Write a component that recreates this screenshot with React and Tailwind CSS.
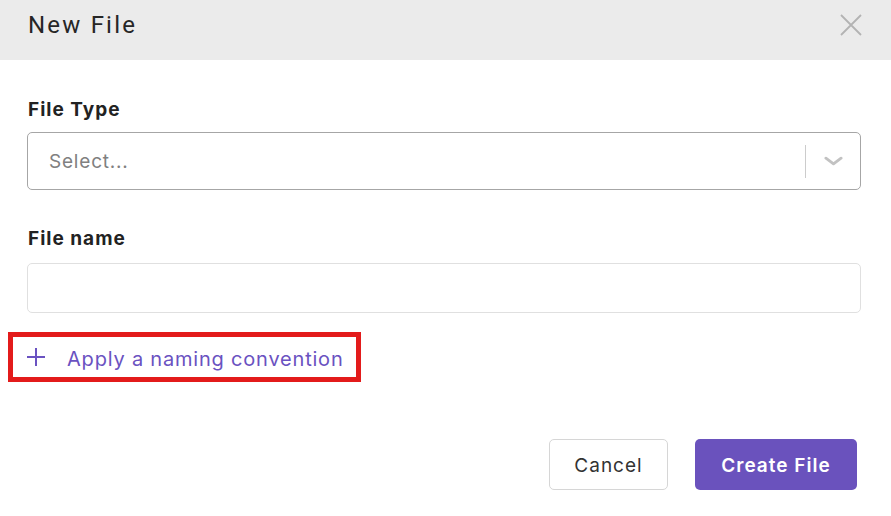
import React from 'react';

const bodyFont = { fontFamily: '"Inter", "Noto Sans", sans-serif' };

export default function App() {
  return (
    <div className="w-[891px] h-[516px] bg-white overflow-hidden" style={bodyFont}>
      {/* Kopfzeile */}
      <div className="h-[60px] bg-[#ebebeb] flex items-center justify-between pl-[28px] pr-[29px] pb-[10px]">
        <h1 className="text-[24px] leading-none text-[#262626] font-['Roboto',sans-serif] tracking-[2.2px]">
          New File
        </h1>
        <button className="w-[22px] h-[22px] text-[#b3b3b3]" aria-label="Close">
          <svg viewBox="0 0 22 22" className="w-[22px] h-[22px]" fill="none" stroke="currentColor" strokeWidth="1.8">
            <path d="M1 1L21 21M21 1L1 21" />
          </svg>
        </button>
      </div>

      <div className="pl-[27px] pr-[30px] pt-[37px]">
        <label className="block text-[19px] leading-[24px] font-bold text-[#222] pl-[1px] tracking-[1px] pt-[1px]">File Type</label>
        <div className="mt-[10px] h-[58px] border border-[#a6a6a6] rounded-[5px] flex items-center">
          <span className="flex-1 pl-[21px] pt-[3px] text-[19px] tracking-[0.8px] text-[#808080]">Select...</span>
          <div className="w-px h-[33px] bg-[#cccccc]" />
          <div className="w-[54px] flex items-center justify-center">
            <svg viewBox="0 0 20 10" className="w-[19px] h-[10px]" fill="none" stroke="#c2c2c2" strokeWidth="3" strokeLinecap="round" strokeLinejoin="round">
              <path d="M2 2L10 8L18 2" />
            </svg>
          </div>
        </div>

        <label className="block mt-[37px] text-[19px] leading-[24px] font-bold text-[#222] pl-[1px] tracking-[1px]">File name</label>
        <input className="mt-[12px] w-full h-[50px] border border-[#e0e0e0] rounded-[5px] outline-none px-4 text-[18px]" />
      </div>

      {/* Namenskonvention */}
      <div className="mt-[19px] ml-[8px] w-[353px] h-[50px] border-[5px] border-[#e31b1b] flex items-center pl-[14px] text-[#6a52c1]">
        <svg viewBox="0 0 18 18" className="w-[18px] h-[18px]" fill="none" stroke="currentColor" strokeWidth="2">
          <path d="M9 0V18M0 9H18" />
        </svg>
        <span className="ml-[22px] text-[20px] leading-none tracking-[0.8px] pt-[3px]">Apply a naming convention</span>
      </div>

      <div className="flex justify-end gap-[27px] pr-[34px] mt-[57px]">
        <button className="w-[119px] h-[51px] pt-[3px] border border-[#d6d6d6] rounded-[5px] text-[19px] tracking-[1px] text-[#333] bg-white">
          Cancel
        </button>
        <button className="w-[162px] h-[51px] pt-[3px] rounded-[5px] bg-[#6a52bd] text-white text-[19px] tracking-[1px] font-semibold">
          Create File
        </button>
      </div>
    </div>
  );
}
